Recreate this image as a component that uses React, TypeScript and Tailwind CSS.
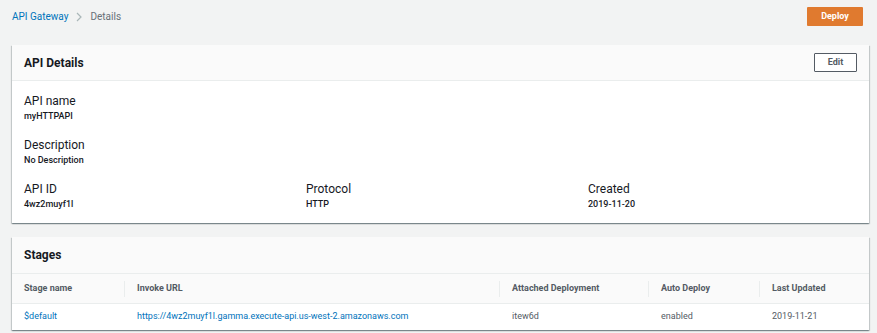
import React from 'react'

const font = { fontFamily: 'Roboto, "Open Sans", "Liberation Sans", sans-serif' }

const Field = ({ label, value }: { label: string; value: string }) => (
  <div className="flex flex-col">
    <span className="text-[12px] leading-[16px] text-[#16191f]">{label}</span>
    <span className="text-[9px] leading-[14px] font-medium text-[#16191f]">{value}</span>
  </div>
)

const columns = [
  { name: 'Stage name', width: 'w-[112px]' },
  { name: 'Invoke URL', width: 'w-[375px]' },
  { name: 'Attached Deployment', width: 'w-[149px]' },
  { name: 'Auto Deploy', width: 'w-[111px]' },
  { name: 'Last Updated', width: 'flex-1' },
]

export default function App() {
  return (
    <div
      className="w-[877px] h-[333px] bg-[#f2f3f3] px-3 pt-[7px] overflow-hidden"
      style={font}
    >
      <div className="flex items-center justify-between h-[19px] pr-[2px]">
        <div className="flex items-center text-[10px]">
          <span className="text-[#0073bb]">API Gateway</span>
          <svg width="8" height="10" viewBox="0 0 8 10" className="mx-[7px]">
            <path d="M2 1l4 4-4 4" fill="none" stroke="#aab7b8" strokeWidth="1.2" />
          </svg>
          <span className="text-[#687078]">Details</span>
        </div>
        <button className="w-[56px] h-[19px] bg-[#e07a2f] text-white text-[9px] font-bold rounded-[1px]">
          Deploy
        </button>
      </div>

      <div className="mt-[19px] w-[857px] bg-white shadow-[0_1px_1px_0_rgba(0,28,36,0.3),1px_1px_1px_0_rgba(0,28,36,0.15),-1px_1px_1px_0_rgba(0,28,36,0.15)]">
        <div className="h-[36px] bg-[#fafafa] border-b border-[#eaeded] flex items-center justify-between pl-3 pr-3">
          <span className="text-[12px] font-bold text-[#16191f]">API Details</span>
          <button className="w-[43px] h-[19px] border border-[#545b64] bg-white text-[9px] font-bold text-[#545b64] rounded-[1px]">
            Edit
          </button>
        </div>
        <div className="px-3 pt-[12px] pb-[12px] flex flex-col gap-[14px]">
          <Field label="API name" value="myHTTPAPI" />
          <Field label="Description" value="No Description" />
          <div className="flex">
            <div className="w-[282px]">
              <Field label="API ID" value="4wz2muyf1l" />
            </div>
            <div className="w-[282px]">
              <Field label="Protocol" value="HTTP" />
            </div>
            <div className="flex-1">
              <Field label="Created" value="2019-11-20" />
            </div>
          </div>
        </div>
      </div>

      <div className="mt-[14px] w-[857px] bg-white shadow-[0_1px_1px_0_rgba(0,28,36,0.3),1px_1px_1px_0_rgba(0,28,36,0.15),-1px_1px_1px_0_rgba(0,28,36,0.15)]">
        <div className="h-[37px] bg-[#fafafa] border-b border-[#eaeded] flex items-center pl-3">
          <span className="text-[12px] font-bold text-[#16191f]">Stages</span>
        </div>
        <div className="flex h-[30px] bg-[#fafafa] border-b border-[#eaeded] items-center">
          {columns.map((c, i) => (
            <div key={c.name} className={`${c.width} flex items-center h-full`}>
              {i > 0 && <div className="w-px h-[16px] bg-[#eaeded]" />}
              <span className="pl-3 text-[9px] font-bold text-[#545b64]">{c.name}</span>
            </div>
          ))}
        </div>
        <div className="flex h-[26px] items-center text-[9px]">
          <div className="w-[112px] pl-3 text-[#0073bb]">$default</div>
          <div className="w-[375px] pl-[13px] text-[#0073bb]">
            https://4wz2muyf1l.gamma.execute-api.us-west-2.amazonaws.com
          </div>
          <div className="w-[149px] pl-[13px] text-[#545b64]">itew6d</div>
          <div className="w-[111px] pl-[13px] text-[#545b64]">enabled</div>
          <div className="flex-1 pl-[13px] text-[#545b64]">2019-11-21</div>
        </div>
      </div>
    </div>
  )
}
